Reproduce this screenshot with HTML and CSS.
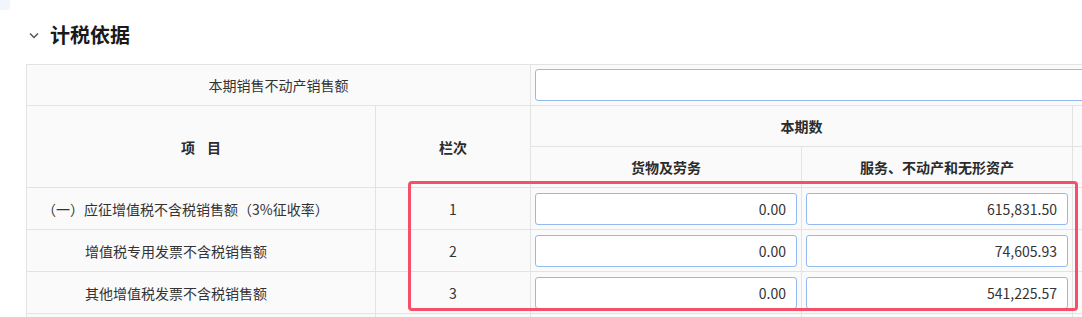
FILE: index.html
```html
<!DOCTYPE html>
<html lang="zh-CN">
<head>
<meta charset="utf-8">
<title>计税依据</title>
<link rel="stylesheet" href="styles.css">
</head>
<body>
<div class="corner"></div>
<section class="panel">
  <div class="panel-head">
    <svg class="chevron" width="10" height="7" viewBox="0 0 10 7"><polyline points="1,1.5 5,5.5 9,1.5" fill="none" stroke="#555" stroke-width="1.5"/></svg>
    <h2 class="panel-title">计税依据</h2>
  </div>
  <div class="table-wrap">
    <table class="tax-table">
      <colgroup>
        <col class="c-name"><col class="c-no"><col class="c-val"><col class="c-val"><col class="c-val"><col class="c-val">
      </colgroup>
      <tr class="r-head">
        <td colspan="2" class="center">本期销售不动产销售额</td>
        <td colspan="4" class="in-cell"><input class="num-input" type="text" value=""></td>
      </tr>
      <tr class="r-head">
        <th rowspan="2"><span class="xm"><span>项</span><span>目</span></span></th>
        <th rowspan="2">栏次</th>
        <th colspan="2">本期数</th>
        <th colspan="2"></th>
      </tr>
      <tr class="r-head">
        <th>货物及劳务</th>
        <th>服务、不动产和无形资产</th>
        <th></th>
        <th></th>
      </tr>
      <tr class="r-data">
        <td class="label l1">（一）应征增值税不含税销售额（3%征收率）</td>
        <td class="center">1</td>
        <td class="in-cell"><input class="num-input" type="text" value="0.00"></td>
        <td class="in-cell"><input class="num-input" type="text" value="615,831.50"></td>
        <td></td><td></td>
      </tr>
      <tr class="r-data">
        <td class="label l2">增值税专用发票不含税销售额</td>
        <td class="center">2</td>
        <td class="in-cell"><input class="num-input" type="text" value="0.00"></td>
        <td class="in-cell"><input class="num-input" type="text" value="74,605.93"></td>
        <td></td><td></td>
      </tr>
      <tr class="r-data">
        <td class="label l2">其他增值税发票不含税销售额</td>
        <td class="center">3</td>
        <td class="in-cell"><input class="num-input" type="text" value="0.00"></td>
        <td class="in-cell"><input class="num-input" type="text" value="541,225.57"></td>
        <td></td><td></td>
      </tr>
      <tr class="r-data">
        <td></td><td></td><td></td><td></td><td></td><td></td>
      </tr>
    </table>
    <div class="highlight"></div>
  </div>
</section>
</body>
</html>
```

FILE: styles.css
```css
html, body {
  margin: 0;
  padding: 0;
  background: #ffffff;
  overflow: hidden;
}
body {
  position: relative;
  width: 1082px;
  height: 317px;
  font-family: "Noto Sans CJK SC", "Noto Sans", sans-serif;
  color: #333333;
  font-size: 14px;
}
.corner {
  position: absolute;
  left: 0;
  top: 0;
  width: 10px;
  height: 10px;
  background: #f2f6fc;
  border-bottom-right-radius: 3px;
}
.panel {
  padding-top: 20px;
}
.panel-head {
  display: flex;
  align-items: center;
  height: 30px;
  padding-left: 29px;
}
.chevron {
  display: block;
  margin-right: 11px;
}
.panel-title {
  margin: 0;
  font-size: 20px;
  font-weight: 700;
  color: #1a1a1a;
  line-height: 30px;
}
.table-wrap {
  position: relative;
  margin-top: 14px;
  margin-left: 26px;
}
.tax-table {
  border-collapse: collapse;
  table-layout: fixed;
  width: 1588px;
  background: #fafafa;
}
.c-name { width: 349px; }
.c-no { width: 155px; }
.c-val { width: 271px; }
.tax-table td,
.tax-table th {
  border: 1px solid #e3e3e3;
  padding: 0 4px;
  font-size: 14px;
  line-height: 20px;
  white-space: nowrap;
  overflow: hidden;
  vertical-align: middle;
}
.tax-table th {
  font-weight: 700;
  text-align: center;
  color: #2b2b2b;
}
.r-head {
  height: 41px;
}
.r-data {
  height: 42px;
}
.center {
  text-align: center;
}
.label.l1 {
  padding-left: 15px;
}
.label.l2 {
  padding-left: 58px;
}
.xm {
  display: inline-flex;
  gap: 12px;
}
.num-input {
  display: block;
  box-sizing: border-box;
  width: 100%;
  height: 32px;
  margin: 0;
  padding: 0 10px;
  border: 1px solid #93b9f1;
  border-radius: 3px;
  background: #ffffff;
  font-family: "Noto Sans CJK SC", "Noto Sans", sans-serif;
  font-size: 14px;
  color: #333333;
  text-align: right;
  outline: none;
}
.highlight {
  position: absolute;
  left: 382px;
  top: 117px;
  width: 670px;
  height: 130px;
  box-sizing: border-box;
  border: 3px solid #f5506a;
  border-radius: 4px;
  pointer-events: none;
}
```
